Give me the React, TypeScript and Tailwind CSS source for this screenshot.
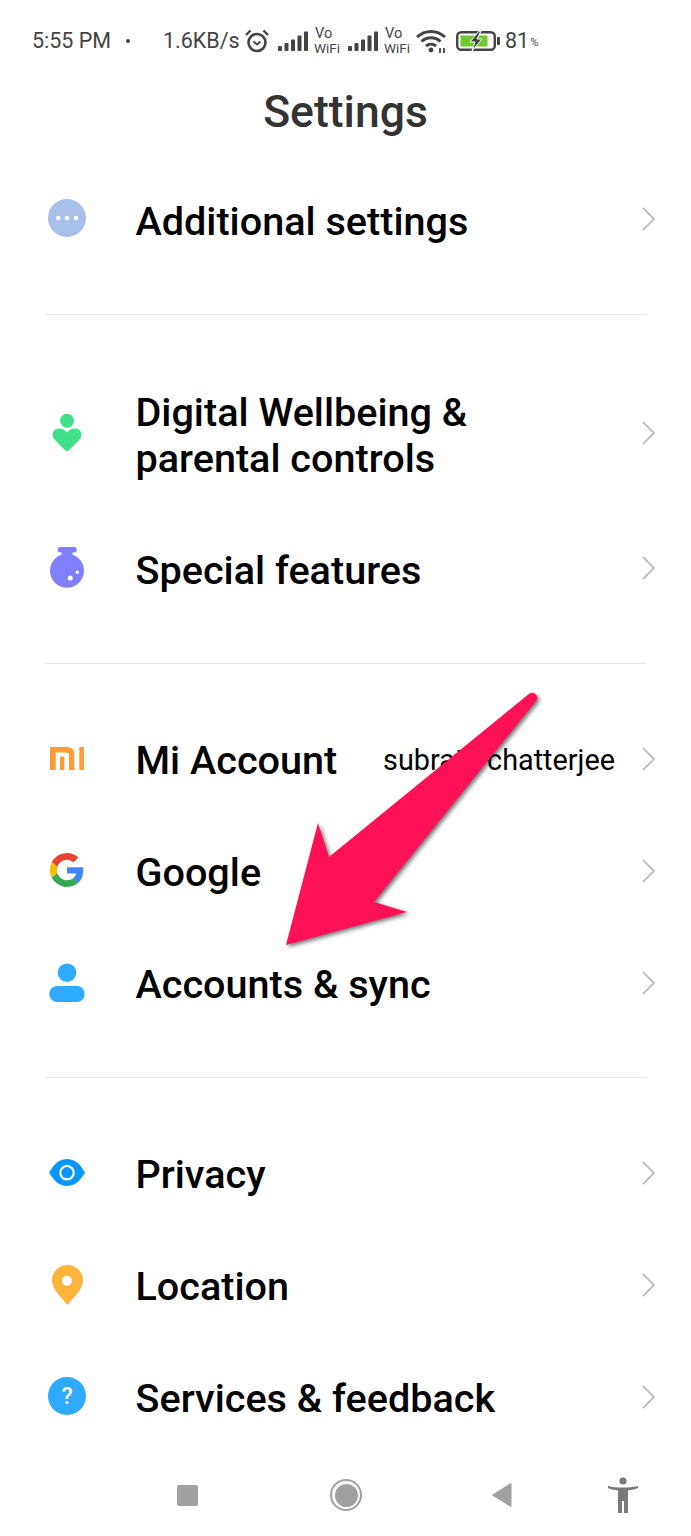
import type { ReactNode } from "react";

function Signal() {
  return (
    <svg width="30" height="20" viewBox="0 0 30 20" className="shrink-0">
      <rect x="0" y="15" width="4" height="5" rx="1" fill="#444" />
      <rect x="6.5" y="12" width="4" height="8" rx="1" fill="#444" />
      <rect x="13" y="8.5" width="4" height="11.5" rx="1" fill="#444" />
      <rect x="19.5" y="4.5" width="4" height="15.5" rx="1" fill="#444" />
      <rect x="26" y="0.5" width="4" height="19.5" rx="1" fill="#444" />
    </svg>
  );
}

function VoWifi() {
  return (
    <div className="flex w-[27px] shrink-0 flex-col text-[13.5px] leading-[14px] text-[#444]">
      <span className="pl-[1px] text-[14.5px]">Vo</span>
      <span>WiFi</span>
    </div>
  );
}

function Alarm() {
  return (
    <svg width="24" height="24" viewBox="0 0 24 24" fill="none" stroke="#444" className="shrink-0">
      <circle cx="12" cy="13.5" r="8.5" strokeWidth="2.6" />
      <path d="M8.5 12.5 L12 15.5 L15.5 12.5" strokeWidth="2" />
      <path d="M1 6 L5.5 1.5 M23 6 L18.5 1.5" strokeWidth="2.4" />
    </svg>
  );
}

function Wifi() {
  return (
    <svg width="30" height="24" viewBox="0 0 30 24" fill="none" stroke="#444" className="shrink-0">
      <path d="M1 8 C9 0.5 21 0.5 29 8" strokeWidth="3" />
      <path d="M5.5 12.5 C11 7.5 19 7.5 24.5 12.5" strokeWidth="3" />
      <path d="M10 17 C13 14.5 17 14.5 20 17" strokeWidth="3" />
      <circle cx="15" cy="21" r="2.4" fill="#444" stroke="none" />
      <path d="M24 24 V19 M28 24 V19" strokeWidth="1.8" />
    </svg>
  );
}

function Battery() {
  return (
    <svg width="44" height="20" viewBox="0 0 44 20" className="shrink-0">
      <rect x="1.2" y="1.2" width="37.6" height="17.6" rx="4" fill="none" stroke="#444" strokeWidth="2.4" />
      <rect x="4.5" y="4.5" width="27" height="11" fill="#6cc92f" />
      <path d="M23 0 L14 11 H19 L16 20 L26 8 H21 L25 0 Z" fill="#444" stroke="#fff" strokeWidth="1" />
      <rect x="41" y="6" width="3" height="8" rx="1" fill="#444" />
    </svg>
  );
}

function StatusBar() {
  return (
    <div className="flex h-[28px] items-center pl-[32px] text-[21.5px] text-[#444]">
      <span className="w-[79px] shrink-0 whitespace-nowrap">5:55 PM</span>
      <span className="ml-[15px] h-[4px] w-[4px] shrink-0 rounded-full bg-[#444]" />
      <span className="ml-[33px] w-[76px] shrink-0 whitespace-nowrap">1.6KB/s</span>
      <div className="ml-[6px]"><Alarm /></div>
      <div className="ml-[9px]"><Signal /></div>
      <div className="ml-[6px]"><VoWifi /></div>
      <div className="ml-[7px]"><Signal /></div>
      <div className="ml-[6px]"><VoWifi /></div>
      <div className="ml-[5px]"><Wifi /></div>
      <div className="ml-[10px]"><Battery /></div>
      <span className="ml-[5px] whitespace-nowrap">81</span>
      <span className="ml-[1px] pt-[5px] text-[11px]">%</span>
    </div>
  );
}

const icons = {
  more: (
    <>
      <circle cx="20" cy="20" r="19" fill="#a8bfea" />
      <circle cx="11.3" cy="20" r="2.3" fill="#fff" />
      <circle cx="20" cy="20" r="2.3" fill="#fff" />
      <circle cx="29" cy="20" r="2.3" fill="#fff" />
    </>
  ),
  heart: (
    <>
      <circle cx="20" cy="8.7" r="7" fill="#43e08c" />
      <path
        d="M20 39 C19 39 18 38.2 17 37.2 L7.5 27.5 C3.5 23 6 16.5 12 16.5 C15.5 16.5 18 18 20 20.5 C22 18 24.5 16.5 28 16.5 C34 16.5 36.5 23 32.5 27.5 L23 37.2 C22 38.2 21 39 20 39 Z"
        fill="#43e08c"
      />
    </>
  ),
  flask: (
    <>
      <rect x="10.7" y="0" width="19" height="5.5" rx="2.7" fill="#8080ff" />
      <rect x="14.5" y="4" width="11" height="6" fill="#8080ff" />
      <circle cx="20" cy="23.7" r="17" fill="#8080ff" />
      <circle cx="23.3" cy="31" r="2.5" fill="#fff" />
      <circle cx="30.3" cy="25.3" r="1.7" fill="#fff" />
    </>
  ),
  mi: (
    <>
      <path
        d="M3 32 V9 H20 Q27.3 9 27.3 16 V32 H22 V17 Q22 14.5 19 14.5 H8.7 V32 Z"
        fill="#ff9a36"
      />
      <rect x="13" y="18.5" width="4.3" height="13.5" fill="#ff9a36" />
      <rect x="32.3" y="9" width="4.7" height="23" fill="#ff9a36" />
    </>
  ),
  google: (
    <g transform="translate(3 3) scale(0.708)">
      <path d="M24 9.5c3.54 0 6.71 1.22 9.21 3.6l6.85-6.85C35.9 2.38 30.47 0 24 0 14.62 0 6.51 5.38 2.56 13.22l7.98 6.19C12.43 13.72 17.74 9.5 24 9.5z" fill="#ea4335" />
      <path d="M46.98 24.55c0-1.57-.15-3.09-.38-4.55H24v9.02h12.94c-.58 2.96-2.26 5.48-4.78 7.18l7.73 6c4.51-4.18 7.09-10.36 7.09-17.65z" fill="#4285f4" />
      <path d="M10.53 28.59c-.48-1.45-.76-2.99-.76-4.59s.27-3.14.76-4.59l-7.98-6.19C.92 16.46 0 20.12 0 24c0 3.88.92 7.54 2.56 10.78l7.97-6.19z" fill="#fbbc05" />
      <path d="M24 48c6.48 0 11.93-2.13 15.89-5.81l-7.73-6c-2.15 1.45-4.92 2.3-8.16 2.3-6.26 0-11.57-4.22-13.47-9.91l-7.98 6.19C6.51 42.62 14.62 48 24 48z" fill="#34a853" />
    </g>
  ),
  person: (
    <>
      <circle cx="20" cy="10.7" r="9.3" fill="#2eaaff" />
      <rect x="2.3" y="24" width="35.4" height="16" rx="8" fill="#2eaaff" />
    </>
  ),
  eye: (
    <>
      <path d="M2 20.5 C8 10 14 7 20 7 C26 7 32 10 38 20.5 C32 31 26 34 20 34 C14 34 8 31 2 20.5 Z" fill="#0a96ff" />
      <circle cx="20" cy="20.7" r="6.7" fill="none" stroke="#fff" strokeWidth="2.2" />
    </>
  ),
  pin: (
    <>
      <path
        d="M20.5 1 A15.5 15.5 0 0 1 36 16.5 C36 25 27 33 20.5 41 C14 33 5 25 5 16.5 A15.5 15.5 0 0 1 20.5 1 Z"
        fill="#ffb53c"
      />
      <circle cx="20" cy="16.7" r="5" fill="#fff" />
    </>
  ),
  help: (
    <>
      <circle cx="20" cy="20" r="19" fill="#2eaaff" />
      <text x="20" y="28" textAnchor="middle" fontSize="23" fontWeight="500" fill="#fff" fontFamily="Roboto, sans-serif">?</text>
    </>
  ),
};

function Chevron() {
  return (
    <svg width="13" height="24" viewBox="0 0 13 24" fill="none" stroke="#bdbdbd" strokeWidth="1.8" className="mb-1 shrink-0">
      <path d="M1 1 L12 12 L1 23" />
    </svg>
  );
}

function Row({ icon, children, sub, tall, high }: { icon: ReactNode; children: ReactNode; sub?: string; tall?: boolean; high?: boolean }) {
  return (
    <div className={`flex items-center pl-[47px] pr-[36px] ${tall ? "h-[158px]" : "h-[112px]"}`}>
      <svg width="40" height="42" viewBox="0 0 40 42" className="mb-1 shrink-0 overflow-visible">
        {icon}
      </svg>
      <div className={`ml-[48.5px] flex-1 whitespace-pre-line text-[39.6px] font-medium leading-[46px] text-black ${high ? "" : "pt-[2px]"}`}>
        {children}
      </div>
      {sub && <span className="mr-[27px] text-[28.8px] text-black">{sub}</span>}
      <Chevron />
    </div>
  );
}

function Divider({ last }: { last?: boolean }) {
  return <div className={`mx-[45px] mb-[41px] h-px bg-[#e6e6e6] ${last ? "mt-[36px]" : "mt-[37px]"}`} />;
}

function Arrow() {
  return (
    <svg
      width="300"
      height="300"
      viewBox="0 0 300 300"
      className="absolute left-[270px] top-[680px] drop-shadow-[2px_2px_2px_rgba(0,0,0,0.55)]"
    >
      <path
        d="M259.5 13.5 Q264 11 267 16 Q268 19 266 21 L104 222 L137 232 L16 265 L48 143 L59 177 Z"
        fill="#ff1158"
      />
    </svg>
  );
}

function NavBar() {
  return (
    <div className="flex h-[46px] items-center pl-[177px]">
      <div className="h-[21px] w-[21px] rounded-[2px] bg-[#a0a0a0]" />
      <div className="ml-[132px] flex h-[32px] w-[32px] items-center justify-center rounded-full border-2 border-[#a0a0a0]">
        <div className="h-[23px] w-[23px] rounded-full bg-[#a0a0a0]" />
      </div>
      <svg width="20" height="24" viewBox="0 0 20 24" className="ml-[130px]">
        <path d="M19 0.5 V23.5 L0.5 12 Z" fill="#a0a0a0" stroke="#a0a0a0" strokeLinejoin="round" />
      </svg>
      <svg width="32" height="36" viewBox="0 0 32 36" className="ml-[95px]">
        <circle cx="16" cy="4" r="3.6" fill="#7a7a7a" />
        <path d="M1 9 C10 11 22 11 31 9 L31 11 C28 12.5 24 13 21 13.5 V36 H17 V24 H15 V36 H11 V13.5 C8 13 4 12.5 1 11 Z" fill="#7a7a7a" />
      </svg>
    </div>
  );
}

export default function App() {
  return (
    <div className="relative h-[1536px] w-[691px] overflow-hidden bg-white font-['Roboto',sans-serif]">
      <div className="h-[72px] pt-[27px]">
        <StatusBar />
      </div>
      <h1 className="h-[93px] text-center text-[44.5px] font-medium leading-[80px] text-[#333]">Settings</h1>

      <Row icon={icons.more}>Additional settings</Row>
      <Divider />
      <Row icon={icons.heart} tall>{"Digital Wellbeing &\nparental controls"}</Row>
      <Row icon={icons.flask}>Special features</Row>
      <Divider />
      <Row icon={icons.mi} sub="subrata chatterjee" high>Mi Account</Row>
      <Row icon={icons.google} high>Google</Row>
      <Row icon={icons.person} high>Accounts &amp; sync</Row>
      <Divider last />
      <Row icon={icons.eye} high>Privacy</Row>
      <Row icon={icons.pin} high>Location</Row>
      <Row icon={icons.help} high>Services &amp; feedback</Row>

      <div className="mt-[17px]">
        <NavBar />
      </div>

      <Arrow />
    </div>
  );
}
